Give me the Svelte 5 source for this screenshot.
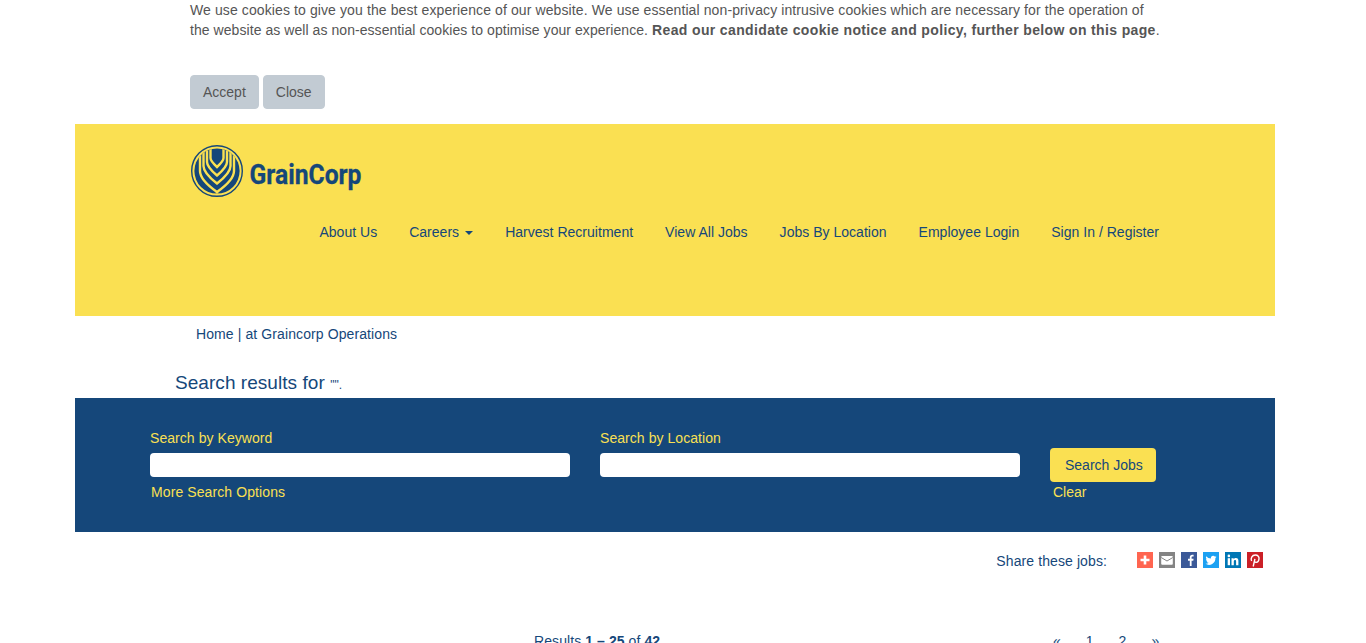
<script lang="ts">
  const navItems = [
    { label: 'About Us' },
    { label: 'Careers', caret: true },
    { label: 'Harvest Recruitment' },
    { label: 'View All Jobs' },
    { label: 'Jobs By Location' },
    { label: 'Employee Login' },
    { label: 'Sign In / Register' },
  ];
  const pages = ['«', '1', '2', '»'];
</script>

<div class="page">
  <div class="wrap">
    <section class="cookie">
      <p>
        We use cookies to give you the best experience of our website. We use essential non-privacy intrusive cookies which are necessary for the operation of<br />
        <span class="second">the website as well as non-essential cookies to optimise your experience.</span> <strong>Read our candidate cookie notice and policy, further below on this page</strong>.
      </p>
      <div class="cookie-btns">
        <button>Accept</button>
        <button>Close</button>
      </div>
    </section>

    <header class="head">
      <svg class="logo" width="172" height="52" viewBox="0 0 172 52" aria-label="GrainCorp">
        <defs>
          <clipPath id="disc"><circle cx="26" cy="26" r="22.6" /></clipPath>
        </defs>
        <circle cx="26" cy="26" r="25.3" fill="none" stroke="#15477a" stroke-width="1.4" />
        <circle cx="26" cy="26" r="22.6" fill="#15477a" />
        <g fill="none" stroke="#fae052" stroke-width="2.4" clip-path="url(#disc)">
          <path d="M19.500 2 V13 Q19.500 16 26 22 Q32.500 16 32.500 13 V2" />
          <path d="M16 2 V17 Q16 22 26 30.500 Q36 22 36 17 V2" />
          <path d="M12.500 4 V21 Q12.500 28 26 38.500 Q39.500 28 39.500 21 V4" />
          <path d="M9 8 V26 Q9 35 26 47 Q43 35 43 26 V8" />
          <path d="M26 47 V50" />
        </g>
        <text x="58.500" y="38.500" class="logo-text" textLength="112" lengthAdjust="spacingAndGlyphs">GrainCorp</text>
      </svg>
      <nav>
        {#each navItems as item}
          <a href="#top">{item.label}{#if item.caret}<span class="caret"></span>{/if}</a>
        {/each}
      </nav>
    </header>

    <div class="crumb"><a href="#top">Home</a> | at Graincorp Operations</div>
    <h1>Search results for <small>"".</small></h1>

    <section class="search">
      <div class="field">
        <label for="kw">Search by Keyword</label>
        <input id="kw" type="text" />
        <a class="below first" href="#top">More Search Options</a>
      </div>
      <div class="field">
        <label for="loc">Search by Location</label>
        <input id="loc" type="text" />
      </div>
      <div class="actions">
        <button>Search Jobs</button>
        <a class="below" href="#top">Clear</a>
      </div>
    </section>

    <div class="share">
      <span class="share-label">Share these jobs:</span>
      <div class="icons">
        <svg width="16" height="16" viewBox="0 0 16 16"><rect width="16" height="16" fill="#ff6550" /><path d="M8 3.500v9M3.500 8h9" stroke="#fff" stroke-width="2.600" /></svg>
        <svg width="16" height="16" viewBox="0 0 16 16"><rect width="16" height="16" fill="#848484" /><rect x="2.200" y="4" width="11.600" height="8.700" rx="1" fill="#fff" /><path d="M2.200 5.500 L8 9 L13.800 5.500" fill="none" stroke="#848484" stroke-width="1" /></svg>
        <svg width="16" height="16" viewBox="0 0 16 16"><rect width="16" height="16" fill="#3b5998" /><path d="M8.800 14V8.800H7V6.800h1.800V5.300C8.800 3.600 9.800 2.700 11.300 2.700c.6 0 1.100 0 1.300.1v1.800h-1c-.8 0-1 .4-1 1v1.200h2l-.3 2h-1.700V14z" fill="#fff" /></svg>
        <svg width="16" height="16" viewBox="0 0 16 16"><rect width="16" height="16" fill="#1da1f2" /><path d="M13.500 4.800c-.4.200-.8.300-1.300.4.500-.3.800-.7 1-1.300-.4.300-.9.500-1.400.6a2.300 2.300 0 0 0-3.900 2.100A6.400 6.400 0 0 1 3.200 4.200a2.300 2.300 0 0 0 .7 3c-.4 0-.7-.1-1-.3 0 1.100.8 2.100 1.800 2.300-.3.100-.7.100-1 0 .3.900 1.100 1.600 2.100 1.600A4.600 4.600 0 0 1 2.500 11.800 6.400 6.400 0 0 0 12.400 6.100c.4-.3.800-.8 1.100-1.300z" fill="#fff" /></svg>
        <svg width="16" height="16" viewBox="0 0 16 16"><rect width="16" height="16" fill="#0077b5" /><rect x="2.700" y="6.200" width="2.300" height="7" fill="#fff" /><circle cx="3.850" cy="3.900" r="1.300" fill="#fff" /><path d="M6.500 6.200h2.200v1c.4-.7 1.200-1.200 2.200-1.200 1.900 0 2.500 1.200 2.500 3v4.200h-2.300V9.500c0-.9-.2-1.500-1-1.500-.9 0-1.300.6-1.300 1.500v3.700H6.500z" fill="#fff" /></svg>
        <svg width="16" height="16" viewBox="0 0 16 16"><rect width="16" height="16" fill="#cb2027" /><path d="M6.200 14.500 7.900 6.800M4.600 9C3.300 6.500 5 3 8.300 3c2.700 0 4 1.900 3.700 4-.3 2.200-1.700 3.500-3.200 3.300-1-.1-1.500-.7-1.600-1.300" fill="none" stroke="#fff" stroke-width="1.400" /></svg>
      </div>
    </div>

    <div class="results">
      <span class="count">Results <b>1 – 25</b> of <b>42</b></span>
      <div class="pager">
        {#each pages as p}
          <a href="#top">{p}</a>
        {/each}
      </div>
    </div>
  </div>
</div>

<style>
  :global(body) {
    margin: 0;
    background: #fff;
  }
  .page {
    height: 643px;
    overflow: hidden;
    font-family: "Liberation Sans", Arial, sans-serif;
    font-size: 14px;
    line-height: 20px;
    color: #15477a;
  }
  .wrap {
    width: 1200px;
    margin-left: 75px;
  }
  a {
    color: inherit;
    text-decoration: none;
  }
  .cookie {
    padding: 0 0 15px 115px;
    color: #555;
  }
  .cookie p {
    margin: 0 0 35px;
    white-space: nowrap;
    letter-spacing: 0.105px;
  }
  .cookie .second {
    letter-spacing: 0.06px;
  }
  .cookie strong {
    letter-spacing: 0.36px;
  }
  .cookie-btns {
    display: flex;
    gap: 4px;
  }
  .cookie-btns button {
    height: 34px;
    padding: 0 12px;
    border: 1px solid #c2cbd3;
    border-radius: 4px;
    background: #c2cbd3;
    color: #555;
    font: inherit;
  }
  .head {
    height: 192px;
    box-sizing: border-box;
    padding: 21px 116px 0 116px;
    background: #fae052;
  }
  .logo {
    display: block;
    overflow: visible;
  }
  .logo-text {
    font-family: Roboto, "Liberation Sans", sans-serif;
    font-weight: 700;
    font-size: 28px;
    fill: #15477a;
    stroke: #15477a;
    stroke-width: 0.3px;
  }
  nav {
    display: flex;
    justify-content: flex-end;
    gap: 32px;
    margin-top: 25px;
    letter-spacing: 0.02px;
  }
  .caret {
    display: inline-block;
    margin-left: 6px;
    vertical-align: middle;
    border-top: 4px solid;
    border-left: 4px solid transparent;
    border-right: 4px solid transparent;
  }
  .crumb {
    padding: 8px 0 0 121px;
    letter-spacing: 0.1px;
  }
  h1 {
    height: 20px;
    margin: 29px 0 5px 100px;
    font-size: 19px;
    font-weight: 400;
    line-height: 20px;
    letter-spacing: 0.05px;
  }
  h1 small {
    font-size: 12px;
  }
  .search {
    display: flex;
    gap: 30px;
    padding: 30px 75px;
    background: #15477a;
    color: #fae052;
  }
  .field {
    display: flex;
    flex-direction: column;
    width: 420px;
  }
  .field label {
    margin-bottom: 5px;
    letter-spacing: 0.06px;
  }
  .field input {
    height: 24px;
    box-sizing: border-box;
    margin: 0 0 5px;
    border: 0;
    border-radius: 4px;
    background: #fff;
  }
  .below {
    display: block;
    margin-left: 3px;
  }
  .below.first {
    margin-left: 1px;
    letter-spacing: 0.1px;
  }
  .actions {
    padding-top: 20px;
  }
  .actions button {
    display: block;
    height: 34px;
    padding: 0 13px 0 15px;
    border: 0;
    border-radius: 4px;
    background: #fae052;
    color: #15477a;
    font: inherit;
  }
  .share {
    display: flex;
    align-items: center;
    justify-content: flex-end;
    gap: 30px;
    margin-top: 19px;
    padding-right: 12px;
  }
  .share-label {
    letter-spacing: 0.1px;
  }
  .icons {
    display: flex;
    gap: 6px;
    margin-top: -2px;
  }
  .icons svg {
    display: block;
  }
  .results {
    display: flex;
    margin-top: 60px;
    padding-left: 459px;
  }
  .count {
    width: 519px;
    letter-spacing: 0.08px;
  }
  .pager {
    display: flex;
    gap: 25px;
  }
</style>
